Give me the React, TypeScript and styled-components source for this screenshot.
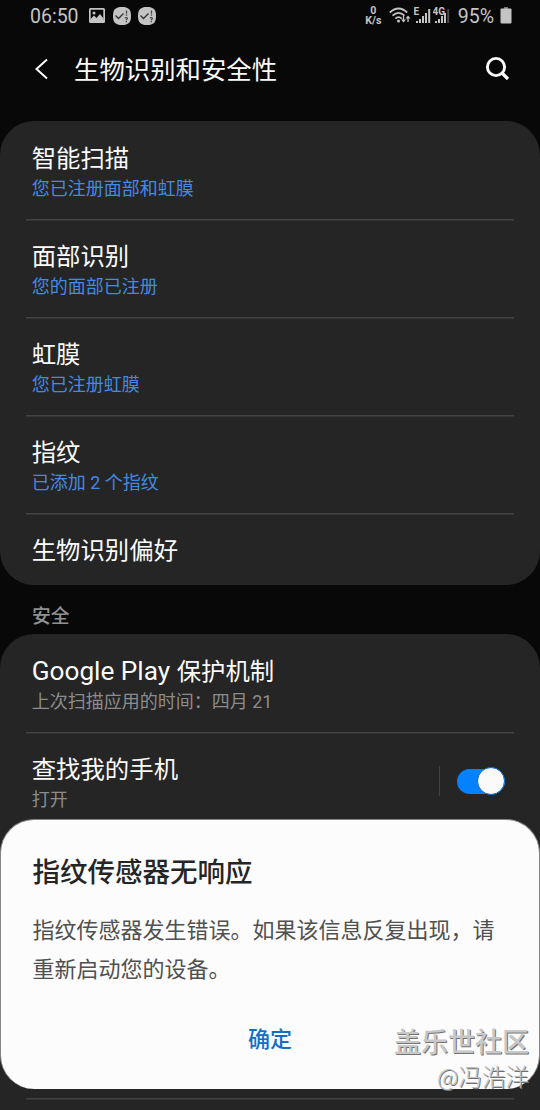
import React from 'react';
import styled, { createGlobalStyle } from 'styled-components';

const GlobalStyle = createGlobalStyle`
  * { box-sizing: border-box; }
  body {
    margin: 0;
    background: #080808;
    font-family: Roboto, "Noto Sans CJK SC", sans-serif;
    color: #fafafa;
  }
`;

const Screen = styled.main`
  position: relative;
  width: 540px;
  height: 1110px;
  overflow: hidden;
  background: #080808;
`;

const StatusBar = styled.header`
  display: flex;
  justify-content: space-between;
  height: 32px;
  padding: 0 28px 0 30px;
  color: #c4c4c4;
`;

const StatusGroup = styled.div`
  display: flex;
  align-items: center;
  height: 31px;
`;

const StatusText = styled.span<{ $gap?: number }>`
  margin-left: ${({ $gap = 0 }) => $gap}px;
  padding-top: 2px;
  font-size: 19.5px;
  line-height: 31px;
`;

const StatusSvg = styled.svg<{ $gap: number }>`
  display: block;
  flex: none;
  margin-left: ${({ $gap }) => $gap}px;
`;

const NetSpeed = styled.div`
  display: flex;
  flex-direction: column;
  align-items: center;
  width: 17px;
  font-size: 10.6px;
  font-weight: 700;
  line-height: 10px;
`;

const TitleBar = styled.div`
  display: flex;
  align-items: center;
  height: 89px;
  padding: 0 30px 15px 34px;
`;

const PageTitle = styled.h1`
  flex: 1;
  margin: 2px 0 0 24px;
  font-size: 25.4px;
  font-weight: 400;
  line-height: 36px;
`;

const Card = styled.section<{ $open?: boolean }>`
  padding: 0 26px;
  border-radius: ${({ $open }) => ($open ? '34px 34px 0 0' : '34px')};
  background: #252525;
`;

const Row = styled.div<{ $height?: number }>`
  display: flex;
  align-items: center;
  justify-content: space-between;
  height: ${({ $height = 98 }) => $height}px;
  padding: 9px 9px 2px 5.7px;
  background: linear-gradient(#424242 50%, #343434 50%) top / 100% 2px no-repeat;

  &:first-child {
    background: none;
  }
`;

const RowTitle = styled.div`
  font-size: 24.4px;
  line-height: 30px;
`;

const Latin = styled.span`
  font-size: 26.2px;
`;

const RowNote = styled.div<{ $accent?: boolean }>`
  font-size: 18px;
  line-height: 30px;
  color: ${({ $accent }) => ($accent ? '#4489e2' : '#8c8c8c')};
`;

const LoneTitle = styled(RowTitle)`
  margin-top: -4px;
`;

const SectionLabel = styled.h2`
  margin: 0;
  height: 49px;
  padding: 8px 32px 0;
  font-size: 18.8px;
  font-weight: 500;
  line-height: 48px;
  color: #909090;
`;

const SwitchArea = styled.div`
  display: flex;
  align-items: center;
  height: 30px;
  margin-bottom: 7px;
  padding-left: 17px;
  border-left: 1px solid #424242;
`;

const Track = styled.div`
  display: flex;
  align-items: center;
  justify-content: flex-end;
  width: 48px;
  height: 25px;
  border-radius: 13px;
  background: #0381fe;
`;

const Thumb = styled.div`
  flex: none;
  width: 28px;
  height: 28px;
  border: 1px solid #0869c9;
  border-radius: 50%;
  background: #fafafa;
`;

const Dialog = styled.section`
  position: absolute;
  left: 0;
  top: 819px;
  width: 540px;
  height: 270px;
  padding: 34px 31.500px 0;
  border: 1px solid #858585;
  border-bottom: 0;
  border-radius: 34px;
  background: #fcfcfc;
  color: #252525;
`;

const DialogTitle = styled.h2`
  margin: 0;
  font-size: 27.5px;
  font-weight: 500;
  line-height: 38px;
`;

const DialogText = styled.p`
  margin: 19px 0 0;
  font-size: 22px;
  line-height: 39px;
  color: #505050;
`;

const DialogButton = styled.button`
  display: block;
  margin: 33px auto 0;
  padding: 0;
  border: 0;
  background: none;
  font: 500 22px/36px Roboto, "Noto Sans CJK SC", sans-serif;
  color: #1070c8;
`;

const Watermark = styled.div`
  position: absolute;
  right: 11px;
  top: 1022px;
  text-align: right;
  white-space: nowrap;
  font-family: "Noto Sans CJK SC", sans-serif;
`;

const Community = styled.div`
  font-size: 27px;
  font-weight: 500;
  line-height: 38px;
  color: #c8c8c8;
  text-shadow: 1px 1px 0 #747474;
`;

const Author = styled.div`
  font-size: 23.5px;
  font-weight: 300;
  line-height: 33px;
  color: #c0c0c0;
  text-shadow: 1px 1px 0 #707070;
`;

const ImageIcon = () => (
  <StatusSvg $gap={10} width="16" height="16" viewBox="0 0 16 16">
    <path d="M1.500 0h13Q16 0 16 1.500v12q0 1.500-1.500 1.500h-13Q0 15 0 13.500v-12Q0 0 1.500 0ZM1.700 1.700v10.300h12.600V1.700Z" fill="currentColor" fillRule="evenodd" />
    <circle cx="5" cy="5" r="1.500" fill="currentColor" />
    <path d="M1.500 11 5 7.500 7.500 10l3.500-4 3.500 4.500V13h-13Z" fill="currentColor" />
  </StatusSvg>
);

const CheckIcon = ({ gap }: { gap: number }) => (
  <StatusSvg $gap={gap} width="18" height="18" viewBox="0 0 18 18">
    <path d="M9 0C15.500 0 18 2.500 18 9s-2.500 9-9 9-9-2.500-9-9 2.500-9 9-9Z" fill="currentColor" />
    <path d="m2.500 8.500 3 3 5-5" fill="none" stroke="#333" strokeWidth="1.400" />
    <path d="M13.500 3.500v3.200M13.500 7.500v1.300M12 11.200c.8-1 2.500-.7 2.300.4-.1.800-1 .7-1 1.600M13.300 14v1.200" fill="none" stroke="#444" strokeWidth="1.300" />
  </StatusSvg>
);

const WifiIcon = () => (
  <StatusSvg $gap={7} width="22" height="18" viewBox="0 0 22 18">
    <g fill="none" stroke="currentColor" strokeWidth="1.700">
      <path d="M.8 5.500Q9.500-2.500 18.200 5.500M3.500 8.700Q9.500 3 15.500 8.700M6.300 11.700Q9.500 8.700 12.700 11.700" />
    </g>
    <circle cx="9.500" cy="14" r="1.500" fill="currentColor" />
    <path d="M14.500 9v5M19 15v-5" stroke="currentColor" strokeWidth="1.300" />
    <path d="M12 12.500h5l-2.500 3ZM16.500 11.500h5L19 8.500Z" fill="currentColor" />
  </StatusSvg>
);

const SignalIcon = ({ label, gap, faded }: { label: string; gap: number; faded?: boolean }) => (
  <StatusSvg $gap={gap} width="18" height="18" viewBox="0 0 18 18">
    <text x={-0.5} y={8} fontSize={10} fontWeight={700} fontFamily="Roboto, sans-serif" fill="currentColor">{label}</text>
    <g fill="currentColor">
      <rect x="2" y="14" width="2" height="2" />
      <rect x="5" y="12" width="2" height="4" />
      <rect x="8" y="9" width="2" height="7" />
      <rect x="11" y="6" width="2" height="10" />
      <rect x="14.200" y="2" width="2" height="14" opacity={faded ? 0.35 : 1} />
    </g>
  </StatusSvg>
);

const BatteryIcon = () => (
  <StatusSvg $gap={6} width="12" height="17" viewBox="0 0 12 17">
    <path d="M4 0h4v2H4Z" fill="#777" />
    <rect x=".5" y="1.500" width="11" height="15" rx="1" fill="currentColor" />
  </StatusSvg>
);

const registrations = [
  { title: '智能扫描', note: '您已注册面部和虹膜' },
  { title: '面部识别', note: '您的面部已注册' },
  { title: '虹膜', note: '您已注册虹膜' },
  { title: '指纹', note: '已添加 2 个指纹' },
];

export default function App() {
  return (
    <Screen>
      <GlobalStyle />
      <StatusBar>
        <StatusGroup>
          <StatusText>06:50</StatusText>
          <ImageIcon />
          <CheckIcon gap={8} />
          <CheckIcon gap={7} />
        </StatusGroup>
        <StatusGroup>
          <NetSpeed><span>0</span><span>K/s</span></NetSpeed>
          <WifiIcon />
          <SignalIcon label="E" gap={3} />
          <SignalIcon label="4G" gap={1} faded />
          <StatusText $gap={7}>95%</StatusText>
          <BatteryIcon />
        </StatusGroup>
      </StatusBar>
      <TitleBar>
        <svg width="16" height="22" viewBox="0 0 16 22">
          <path d="M13 1.500 2.500 11 13 20.500" fill="none" stroke="#fafafa" strokeWidth="2" />
        </svg>
        <PageTitle>生物识别和安全性</PageTitle>
        <svg width="25" height="26" viewBox="0 0 25 26">
          <circle cx="11" cy="11" r="8.600" fill="none" stroke="#fafafa" strokeWidth="2.900" />
          <path d="m17 17 6 6" stroke="#fafafa" strokeWidth="3.200" />
        </svg>
      </TitleBar>
      <Card>
        {registrations.map(({ title, note }) => (
          <Row key={title}>
            <div>
              <RowTitle>{title}</RowTitle>
              <RowNote $accent>{note}</RowNote>
            </div>
          </Row>
        ))}
        <Row $height={72}>
          <LoneTitle>生物识别偏好</LoneTitle>
        </Row>
      </Card>
      <SectionLabel>安全</SectionLabel>
      <Card $open>
        <Row>
          <div>
            <RowTitle><Latin>Google Play </Latin>保护机制</RowTitle>
            <RowNote>上次扫描应用的时间：四月 21</RowNote>
          </div>
        </Row>
        <Row>
          <div>
            <RowTitle>查找我的手机</RowTitle>
            <RowNote>打开</RowNote>
          </div>
          <SwitchArea>
            <Track><Thumb /></Track>
          </SwitchArea>
        </Row>
        <Row $height={268} />
        <Row $height={12} />
      </Card>
      <Dialog role="dialog">
        <DialogTitle>指纹传感器无响应</DialogTitle>
        <DialogText>指纹传感器发生错误。如果该信息反复出现，请重新启动您的设备。</DialogText>
        <DialogButton>确定</DialogButton>
      </Dialog>
      <Watermark>
        <Community>盖乐世社区</Community>
        <Author>@冯浩洋</Author>
      </Watermark>
    </Screen>
  );
}
